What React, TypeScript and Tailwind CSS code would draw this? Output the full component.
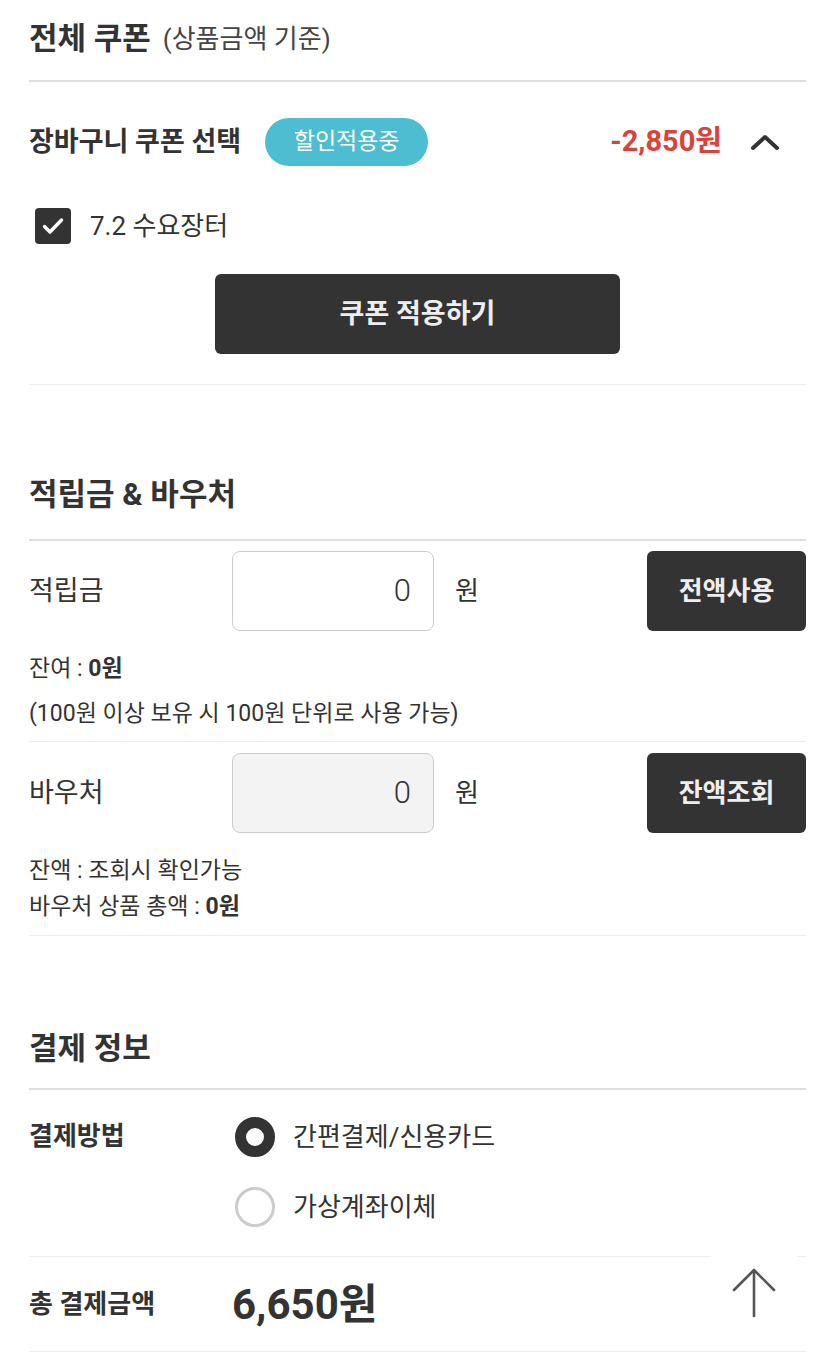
import { useState } from 'react';

const font = "font-['Roboto','Noto_Sans_CJK_KR',sans-serif]";

export default function App() {
  const [checked, setChecked] = useState(true);
  const [method, setMethod] = useState<'card' | 'vbank'>('card');

  return (
    <div className={`${font} relative bg-white px-[29px] text-[#333]`}>
      {/* 전체 쿠폰 */}
      <div className="flex h-[82px] items-center gap-3 border-b-2 border-[#dedede] pb-[2px]">
        <h2 className="text-[31px] font-bold">전체 쿠폰</h2>
        <span className="text-[26px] text-[#444]">(상품금액 기준)</span>
      </div>

      <div className="flex h-[120px] items-center">
        <span className="text-[27px] font-bold">장바구니 쿠폰 선택</span>
        <span className="ml-[24px] flex h-[48px] w-[163px] items-center justify-center rounded-full bg-[#4dbdd1] text-[23px] text-white">
          할인적용중
        </span>
        <span className="ml-auto text-[29px] font-bold text-[#d9433b]">-2,850원</span>
        <svg className="ml-[28px] mr-[26px]" width="30" height="18" viewBox="0 0 30 18" fill="none">
          <polyline points="3,15 15,4 27,15" stroke="#333" strokeWidth="4" strokeLinecap="round" strokeLinejoin="round" />
        </svg>
      </div>

      <label className="flex h-[48px] cursor-pointer items-center gap-[19px] pl-[6px]" onClick={() => setChecked(!checked)}>
        <span className={`flex h-[36px] w-[36px] items-center justify-center rounded-[4px] ${checked ? 'bg-[#333]' : 'border-2 border-[#ccc] bg-white'}`}>
          {checked && (
            <svg width="24" height="20" viewBox="0 0 24 20" fill="none">
              <polyline points="3.5,10.5 9,16 20.5,4" stroke="#fff" strokeWidth="3.4" strokeLinecap="round" strokeLinejoin="round" />
            </svg>
          )}
        </span>
        <span className="text-[26px] text-[#333]">7.2 수요장터</span>
      </label>

      <div className="mt-[24px] flex justify-center">
        <button className="h-[80px] w-[405px] rounded-[6px] bg-[#333] text-[27px] font-bold text-[#eee]">
          쿠폰 적용하기
        </button>
      </div>

      <div className="mt-[30px] border-t border-[#eee]" />

      {/* 적립금 & 바우처 */}
      <div className="mt-[76px] flex h-[80px] items-center border-b-2 border-[#dedede] pb-[10px]">
        <h2 className="text-[31px] font-bold">적립금 &amp; 바우처</h2>
      </div>

      <div className="mt-[10px] flex h-[80px] items-center">
        <span className="w-[203px] text-[27px]">적립금</span>
        <div className="flex h-[80px] w-[202px] items-center justify-end rounded-[8px] border border-[#ccc] bg-white pr-[22px] text-[31px] font-light">
          0
        </div>
        <span className="ml-[21px] text-[26px]">원</span>
        <button className="ml-auto h-[80px] w-[159px] rounded-[6px] bg-[#333] text-[26px] font-bold text-[#eee]">
          전액사용
        </button>
      </div>
      <div className="mt-[15px] border-b border-[#eee] pb-[5px] text-[23px] leading-[45px]">
        <p>
          잔여 : <b>0원</b>
        </p>
        <p>(100원 이상 보유 시 100원 단위로 사용 가능)</p>
      </div>

      <div className="mt-[11px] flex h-[80px] items-center">
        <span className="w-[203px] text-[27px]">바우처</span>
        <div className="flex h-[80px] w-[202px] items-center justify-end rounded-[8px] border border-[#ccc] bg-[#f3f3f3] pr-[22px] text-[31px] font-light">
          0
        </div>
        <span className="ml-[21px] text-[26px]">원</span>
        <button className="ml-auto h-[80px] w-[159px] rounded-[6px] bg-[#333] text-[26px] font-bold text-[#eee]">
          잔액조회
        </button>
      </div>
      <div className="mt-[20px] border-b border-[#eee] pb-[10px] text-[23px] leading-[36px]">
        <p>잔액 : 조회시 확인가능</p>
        <p>
          바우처 상품 총액 : <b>0원</b>
        </p>
      </div>

      {/* 결제 정보 */}
      <div className="mt-[74px] flex h-[80px] items-center border-b-2 border-[#dedede]">
        <h2 className="text-[31px] font-bold">결제 정보</h2>
      </div>

      <div className="mt-[12px] flex border-b border-[#eee] pb-[14px]">
        <span className="flex h-[70px] w-[206px] items-center pb-[2px] text-[26px] font-bold">결제방법</span>
        <div className="flex flex-col">
          {[
            { id: 'card' as const, label: '간편결제/신용카드' },
            { id: 'vbank' as const, label: '가상계좌이체' },
          ].map((m) => (
            <label key={m.id} className="flex h-[70px] cursor-pointer items-center gap-[18px]" onClick={() => setMethod(m.id)}>
              <span
                className={`h-[40px] w-[40px] rounded-full ${method === m.id ? 'border-[11px] border-[#333]' : 'border-[3px] border-[#ccc]'}`}
              />
              <span className="text-[26px]">{m.label}</span>
            </label>
          ))}
        </div>
      </div>

      <div className="flex h-[95px] items-center border-b border-[#eee]">
        <span className="w-[203px] text-[26px] font-bold">총 결제금액</span>
        <span className="text-[42px] font-bold">6,650원</span>
      </div>
      <div className="h-[6px]" />

      {/* 맨 위로 */}
      <button className="absolute bottom-[12px] right-[38px] flex h-[90px] w-[86px] items-start justify-center bg-white pt-[10px]">
        <svg width="52" height="52" viewBox="0 0 52 52" fill="none">
          <polyline points="4,24 24,4 44,24" stroke="#555" strokeWidth="2.6" strokeLinecap="round" strokeLinejoin="round" transform="translate(2,0)" />
          <line x1="26" y1="5" x2="26" y2="50" stroke="#555" strokeWidth="2.6" strokeLinecap="round" />
        </svg>
      </button>
    </div>
  );
}
